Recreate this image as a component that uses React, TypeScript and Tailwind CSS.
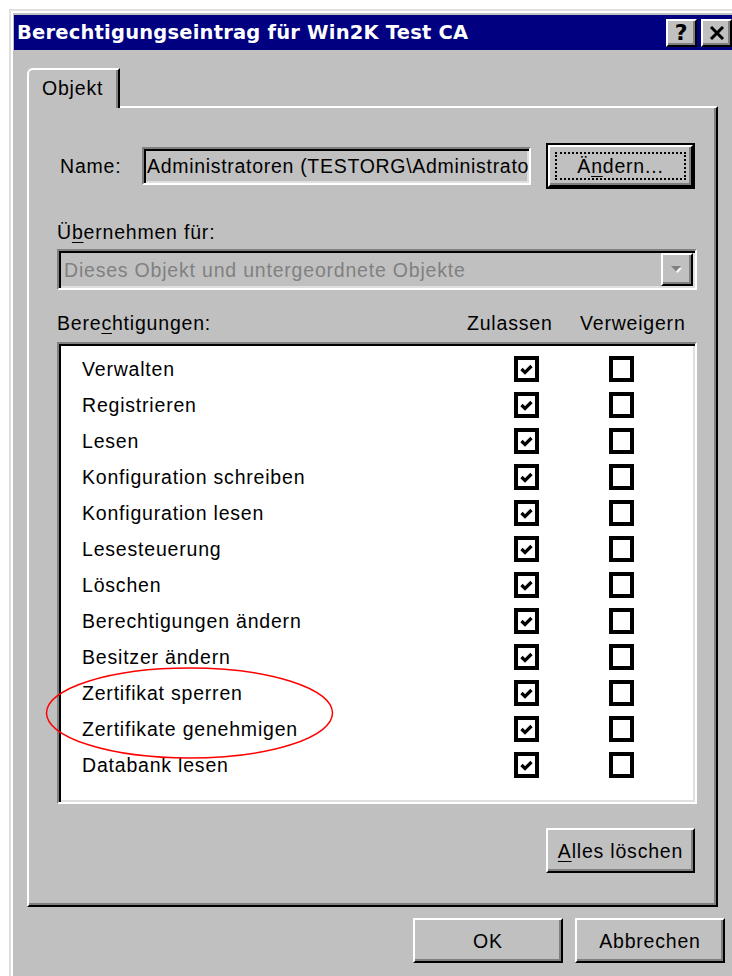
import React from "react";

const font = "font-['Liberation_Sans',Arial,sans-serif] text-[19.5px] tracking-[0.8px] leading-[22px]";

const raised =
  "border-2 border-t-white border-l-white border-r-black border-b-black shadow-[inset_-2px_-2px_0_#808080]";
const sunken =
  "border-2 border-t-[#808080] border-l-[#808080] border-r-white border-b-white shadow-[inset_2px_2px_0_#000,inset_-2px_-2px_0_#dfdfdf]";

const permissions = [
  "Verwalten",
  "Registrieren",
  "Lesen",
  "Konfiguration schreiben",
  "Konfiguration lesen",
  "Lesesteuerung",
  "Löschen",
  "Berechtigungen ändern",
  "Besitzer ändern",
  "Zertifikat sperren",
  "Zertifikate genehmigen",
  "Databank lesen",
];

const Check = ({ checked }: { checked: boolean }) => (
  <div className="w-[25px] h-[26px] border-[4px] border-black bg-white flex items-center justify-center">
    {checked && (
      <svg width="13" height="11" viewBox="0 0 13 11">
        <path d="M1.5 5 L5 8.5 L11.5 2" fill="none" stroke="#000" strokeWidth="3.2" />
      </svg>
    )}
  </div>
);

const TitleButton = ({ children }: { children: React.ReactNode }) => (
  <div
    className={`${raised} w-[31px] h-[28px] bg-[#c0c0c0] flex items-center justify-center text-black font-bold text-[22px] leading-none font-['DejaVu_Sans',sans-serif]`}
  >
    {children}
  </div>
);

const Button = ({ children, className = "" }: { children: React.ReactNode; className?: string }) => (
  <div className={`${raised} bg-[#c0c0c0] flex items-center justify-center ${className}`}>{children}</div>
);

const App = () => {
  return (
    <div className={`w-[732px] h-[976px] overflow-hidden bg-white relative ${font} text-black`}>
      <div className="ml-[9px] mt-[9px] w-[760px] h-[1000px] bg-[#c0c0c0] border-l-2 border-t-2 border-[#dfdfdf] shadow-[inset_2px_2px_0_#fff] pl-[3px] pt-[4px]">
        {/* caption */}
        <div className="w-[720px] h-[35px] bg-[#000080] flex items-center pl-[3px] pr-[2px]">
          <span className="flex-1 text-white font-bold font-['DejaVu_Sans',sans-serif] text-[19.5px] tracking-[0.2px] whitespace-nowrap">
            Berechtigungseintrag für Win2K Test CA
          </span>
          <div className="flex gap-[4px]">
            <TitleButton>?</TitleButton>
            <TitleButton>
              <svg width="16" height="14" viewBox="0 0 16 14">
                <path d="M2 1 L14 13 M14 1 L2 13" stroke="#000" strokeWidth="3" />
              </svg>
            </TitleButton>
          </div>
        </div>

        {/* tab strip */}
        <div className="mt-[18px] ml-[13px]">
          <div className="relative z-10 -mb-[2px] w-[93px] h-[40px] bg-[#c0c0c0] border-l-2 border-t-2 border-r-2 border-l-white border-t-white border-r-black rounded-tl-[6px] shadow-[inset_-2px_0_0_#808080] pl-[13px] pt-[7px]">
            Objekt
          </div>
          <div className="w-[691px] h-[801px] border-2 border-t-white border-l-white border-r-black border-b-black shadow-[inset_-2px_-2px_0_#808080] pl-[28px] pt-[35px]">
            {/* name row */}
            <div className="flex items-center w-[640px]">
              <span className="w-[85px] pl-[3px]">Name:</span>
              <div className={`${sunken} w-[389px] h-[38px] flex items-center pl-[3px] overflow-hidden whitespace-nowrap tracking-[0.7px]`}>
                Administratoren (TESTORG\Administratoren)
              </div>
              <div className="ml-[15px] w-[149px] h-[46px] border-2 border-black">
                <div className={`${raised} w-full h-full bg-[#c0c0c0] p-[5px]`}>
                  <div className="w-full h-full border-2 border-dotted border-black flex items-center justify-center">
                    <span>
                      Ä<span className="underline underline-offset-[3px]">n</span>dern...
                    </span>
                  </div>
                </div>
              </div>
            </div>

            {/* apply to */}
            <div className="mt-[32px]">
              Ü<span className="underline underline-offset-[3px]">b</span>ernehmen für:
            </div>
            <div className={`${sunken} mt-[6px] w-[640px] h-[41px] flex items-center pl-[5px] pr-[2px] text-[#808080]`}>
              <span className="flex-1">Dieses Objekt und untergeordnete Objekte</span>
              <div className={`${raised} w-[32px] h-[33px] flex items-center justify-center`}>
                <svg width="14" height="9" viewBox="0 0 14 9">
                  <path d="M3 3 L12 3 L7.5 8 Z" fill="#fff" />
                  <path d="M1 1 L11 1 L6 6.5 Z" fill="#808080" />
                </svg>
              </div>
            </div>

            {/* permissions header */}
            <div className="mt-[22px] flex w-[640px]">
              <span className="w-[410px]">
                Bere<span className="underline underline-offset-[3px]">c</span>htigungen:
              </span>
              <span className="w-[113px]">Zulassen</span>
              <span>Verweigern</span>
            </div>

            {/* permission list */}
            <div className={`${sunken} mt-[8px] w-[640px] h-[462px] bg-white pt-[7px]`}>
              {permissions.map((p) => (
                <div key={p} className="h-[36px] flex items-center pl-[23px]">
                  <span className="w-[432px] whitespace-nowrap">{p}</span>
                  <Check checked />
                  <div className="w-[70px]" />
                  <Check checked={false} />
                </div>
              ))}
            </div>

            <div className="mt-[24px] w-[640px] flex justify-end pr-[2px]">
              <Button className="w-[149px] h-[45px]">
                <span>
                  <span className="underline underline-offset-[3px]">A</span>lles löschen
                </span>
              </Button>
            </div>
          </div>

          {/* dialog buttons */}
          <div className="mt-[11px] flex gap-[12px] ml-[386px]">
            <Button className="w-[150px] h-[45px]">OK</Button>
            <Button className="w-[150px] h-[45px]">Abbrechen</Button>
          </div>
        </div>
      </div>

      {/* hand-drawn highlight */}
      <svg className="absolute left-0 top-0 pointer-events-none" width="732" height="976">
        <ellipse cx="189.5" cy="713" rx="143" ry="45" fill="none" stroke="#ff0000" strokeWidth="1.5" />
      </svg>
    </div>
  );
};

export default App;
